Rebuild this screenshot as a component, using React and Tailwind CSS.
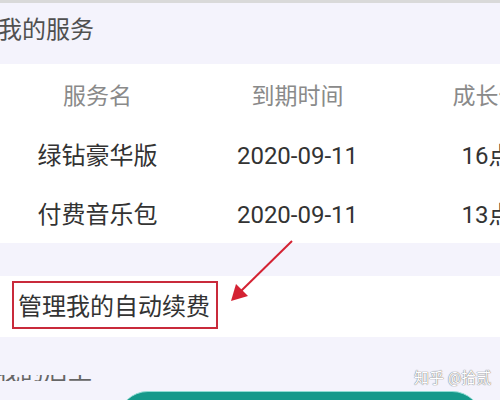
export default function App() {
  const rows = [
    ["绿钻豪华版", "2020-09-11", "16点"],
    ["付费音乐包", "2020-09-11", "13点"],
  ];
  return (
    <div className="relative w-[500px] h-[400px] overflow-hidden bg-[#f4f3fc] font-['Roboto','Noto_Sans_CJK_SC',sans-serif]">
      <div className="h-[3px] bg-[#d9d9d9]" />
      <div className="h-[61px] flex items-center pb-[8px] ml-[-2px] text-[24px] text-[#505050] leading-none">
        我的服务
      </div>
      <div className="h-[179px] bg-white pt-[3px] overflow-hidden">
        <div className="grid grid-cols-[195px_205px_174px] h-[59px] items-center text-center text-[23px] text-[#8a8a8a] leading-none whitespace-nowrap">
          <div>服务名</div>
          <div>到期时间</div>
          <div>成长值</div>
        </div>
        {rows.map((r, i) => (
          <div
            key={i}
            className="grid grid-cols-[195px_205px_174px] h-[59px] items-center text-center text-[24px] text-[#333333] leading-none whitespace-nowrap"
          >
            <div>{r[0]}</div>
            <div>{r[1]}</div>
            <div>{r[2]}</div>
          </div>
        ))}
      </div>
      <div className="h-[33px]" />
      <div className="h-[61px] bg-white pt-[5px] pl-[12px]">
        <div className="w-[206px] h-[48px] border-2 border-[#c92a3b] flex items-center pl-[4px] pt-[4px] text-[24px] text-[#333333] leading-none whitespace-nowrap">
          管理我的自动续费
        </div>
      </div>
      <div className="h-[38px]" />
      <div className="h-[6px] overflow-hidden ml-[-4px] flex items-end">
        <div className="text-[24px] leading-[24px] h-[24px] mb-[-3px] text-[#666666] whitespace-nowrap">我的后工</div>
      </div>
      <div className="mt-[10px] ml-[118px] w-[364px] h-[60px] rounded-[30px] bg-[#14998a] border-t border-[#8fdcd3]" />
      <div className="absolute left-[414px] top-[371px] text-[15px] leading-none text-white whitespace-nowrap [text-shadow:0_0_1px_#777,0_0_1px_#777]">
        知乎 @拾贰
      </div>
      <svg className="absolute left-0 top-0" width="500" height="400" viewBox="0 0 500 400">
        <line x1="292" y1="241" x2="240" y2="292" stroke="#d42233" strokeWidth="2" />
        <polygon points="231,301 236,284 248,296" fill="#d42233" />
      </svg>
    </div>
  );
}
